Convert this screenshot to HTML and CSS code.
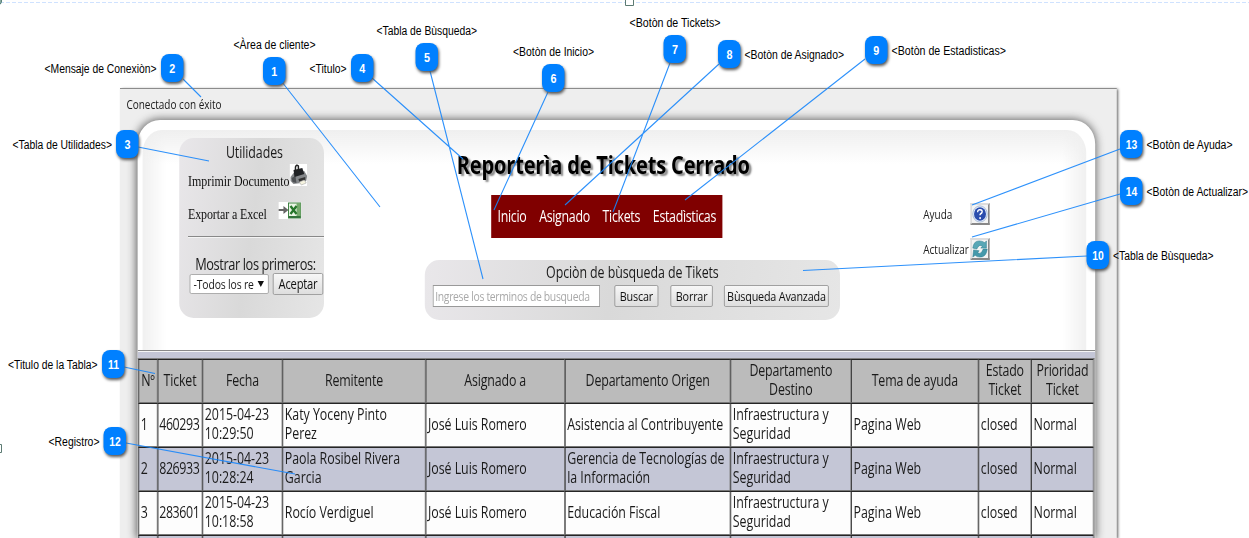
FILE: index.html
```html
<!DOCTYPE html>
<html lang="es">
<head>
<meta charset="utf-8">
<title>Reporterìa de Tickets Cerrado</title>
<link rel="stylesheet" href="styles.css">
</head>
<body>
<main class="window">
  <p class="status">Conectado con éxito</p>
  <section class="panel">
    <div class="panel-head">
      <aside class="utilities">
        <h2 class="box-title">Utilidades</h2>
        <div class="util-row print"><span class="util-link">Imprimir Documento</span>
          <svg class="icon-print" viewBox="0 0 18 22" preserveAspectRatio="none"><path fill="#fff" d="M0 0h18v22H0z"/><path d="M1 13l3-4 11-2 3 5-1 5-5 2-8 1-3-3z" fill="#85888b"/><path d="M2 14l4-2 1 7-4-1z" fill="#4d5053"/><path d="M4 6l9-2 2 6-10 3z" fill="#202225"/><path d="M6 7V3q1-3 3-1v5" fill="none" stroke="#222" stroke-width="1.5"/><path d="M9 15l7-2v3l-6 2z" fill="#333"/><path d="M10 18l5-2 2 3-5 2z" fill="#f5f3df" stroke="#aaa" stroke-width=".6"/></svg>
        </div>
        <div class="util-row excel"><span class="util-link">Exportar a Excel</span>
          <svg class="icon-excel" viewBox="0 0 23 17" preserveAspectRatio="none"><path fill="#fff" d="M0 0h23v17H0z"/><path d="M0 7h5V4l5 4-5 4V9H0z" fill="#666"/><path d="M10 1h12v15H10z" fill="#eaf5e5" stroke="#408344"/><path d="M18 1h4v15h-4z" fill="#76aa6d"/><path d="M12 4l6 8m0-8l-6 8" stroke="#26762b" stroke-width="2.3"/><path d="M10 15h12" stroke="#32733a" stroke-width="2"/></svg>
        </div>
        <hr class="rule">
        <p class="show-label">Mostrar los primeros:</p>
        <div class="show-row"><div class="select"><span class="select-text">-Todos los re</span><span class="arrow"></span></div><button class="btn accept">Aceptar</button></div>
      </aside>
      <div class="center">
        <h1 class="title">Reporterìa de Tickets Cerrado</h1>
        <nav class="nav"><a>Inicio</a><a>Asignado</a><a>Tickets</a><a>Estadìsticas</a></nav>
        <form class="search">
          <h2 class="box-title search-title">Opciòn de bùsqueda de Tikets</h2>
          <div class="search-row"><input class="query" placeholder="Ingrese los terminos de busqueda"><button type="button" class="btn find">Buscar</button><button type="button" class="btn clear">Borrar</button><button type="button" class="btn advanced">Bùsqueda Avanzada</button></div>
        </form>
      </div>
      <div class="tools">
        <div class="tool"><span>Ayuda</span><span class="tool-btn"><svg viewBox="0 0 20 20" preserveAspectRatio="none"><circle cx="10" cy="10" r="9" fill="#edf4ff" stroke="#9cb4d2"/><circle cx="10" cy="10" r="7.500" fill="#2b4dad"/><path d="M7 8q.2-3 3-2.700 3.500.3 2.500 2.700-.3 1-1.700 1.700-.8.5-.8 1.700" fill="none" stroke="#fff" stroke-width="1.8"/><circle cx="10.100" cy="14.500" r="1.200" fill="#fff"/></svg></span></div>
        <div class="tool"><span>Actualizar</span><span class="tool-btn"><svg viewBox="0 0 20 20" preserveAspectRatio="none"><path d="M1 9Q2 1 9 1q4 0 7 2l2-2v8h-7l2-2q-4-3-7 3z" fill="#58a7b6" stroke="#287b8d" stroke-width=".6"/><path d="M19 10q-1 9-9 9-4 0-6-2l-3 2 1-8 7 1-2 2q4 3 7-4z" fill="#4599ab" stroke="#287b8d" stroke-width=".6"/></svg></span></div>
      </div>
    </div>
    <div class="band"></div>
    <table class="tickets">
      <colgroup><col class="c-num"><col class="c-ticket"><col class="c-date"><col class="c-from"><col class="c-to"><col class="c-origin"><col class="c-dest"><col class="c-topic"><col class="c-state"><col class="c-prio"></colgroup>
      <tr><th>Nº</th><th>Ticket</th><th>Fecha</th><th>Remitente</th><th>Asignado a</th><th>Departamento Origen</th><th>Departamento<br>Destino</th><th>Tema de ayuda</th><th>Estado<br>Ticket</th><th>Prioridad<br>Ticket</th></tr>
      <tr><td>1</td><td class="id">460293</td><td>2015-04-23<br>10:29:50</td><td>Katy Yoceny Pinto<br>Perez</td><td>José Luis Romero</td><td>Asistencia al Contribuyente</td><td>Infraestructura y<br>Seguridad</td><td>Pagina Web</td><td>closed</td><td>Normal</td></tr>
      <tr class="alt"><td>2</td><td class="id">826933</td><td>2015-04-23<br>10:28:24</td><td>Paola Rosibel Rivera<br>Garcia</td><td>José Luis Romero</td><td>Gerencia de Tecnologías de<br>la Información</td><td>Infraestructura y<br>Seguridad</td><td>Pagina Web</td><td>closed</td><td>Normal</td></tr>
      <tr><td>3</td><td class="id">283601</td><td>2015-04-23<br>10:18:58</td><td>Rocío Verdiguel</td><td>José Luis Romero</td><td>Educación Fiscal</td><td>Infraestructura y<br>Seguridad</td><td>Pagina Web</td><td>closed</td><td>Normal</td></tr>
      <tr class="alt"><td></td><td></td><td></td><td></td><td></td><td></td><td></td><td></td><td></td><td></td></tr>
    </table>
  </section>
</main>

<svg class="callouts" width="1249" height="538" viewBox="0 0 1249 538">
  <path d="M0 2.500H1249" stroke="#cfe2ff" stroke-dasharray="4 2"/>
  <circle cx="-3" cy="1" r="4.500" fill="#8fb0a8" stroke="#4f7a70"/>
  <path d="M625.500-2h8v7.500h-8zM-6 444.500h7.500v8H-6z" fill="#fff" stroke="#5c7b73"/>
  <g class="leaders">
    <path d="M282 82L380 207M183 79l18 18M138 147l71 14M372 78l91 81M430 71l53 208M548 92l-54 118M670 63l-57 149M719 64L565 205M865 59L685 200M1087 256l-284 14.500M124 367l31 6.500M126 443l169 31M1120 149l-148 56M1120 194l-148 43"/>
  </g>
  <g class="badges">
    <rect x="263" y="57" width="22.500" height="28" rx="8"/><rect x="161" y="54" width="22.500" height="28" rx="8"/><rect x="116" y="130" width="22.500" height="28" rx="8"/><rect x="351" y="54" width="22.500" height="28" rx="8"/><rect x="415.500" y="43" width="22.500" height="28" rx="8"/><rect x="542" y="64" width="22.500" height="28" rx="8"/><rect x="663.500" y="35" width="22.500" height="28" rx="8"/><rect x="718" y="40" width="22.500" height="28" rx="8"/><rect x="865" y="36" width="22.500" height="28" rx="8"/><rect x="1086.500" y="241" width="22.500" height="28" rx="8"/><rect x="102" y="350" width="22.500" height="28" rx="8"/><rect x="103.500" y="427" width="22.500" height="28" rx="8"/><rect x="1120" y="130" width="22.500" height="28" rx="8"/><rect x="1120" y="177" width="22.500" height="28" rx="8"/>
  </g>
  <g class="numbers">
    <text x="274.300" y="76" textLength="6" lengthAdjust="spacingAndGlyphs">1</text><text x="172.300" y="73" textLength="6" lengthAdjust="spacingAndGlyphs">2</text><text x="127.500" y="149" textLength="6" lengthAdjust="spacingAndGlyphs">3</text><text x="362.300" y="73" textLength="6" lengthAdjust="spacingAndGlyphs">4</text><text x="427" y="62" textLength="6" lengthAdjust="spacingAndGlyphs">5</text><text x="553.500" y="83" textLength="6" lengthAdjust="spacingAndGlyphs">6</text><text x="675" y="54" textLength="6" lengthAdjust="spacingAndGlyphs">7</text><text x="729.500" y="59" textLength="6" lengthAdjust="spacingAndGlyphs">8</text><text x="876.300" y="55" textLength="6" lengthAdjust="spacingAndGlyphs">9</text>
    <text x="1098" y="260" textLength="11.500" lengthAdjust="spacingAndGlyphs">10</text><text x="113.500" y="369" textLength="11" lengthAdjust="spacingAndGlyphs">11</text><text x="115" y="446" textLength="11.500" lengthAdjust="spacingAndGlyphs">12</text><text x="1131.500" y="149" textLength="11.500" lengthAdjust="spacingAndGlyphs">13</text><text x="1131.500" y="196" textLength="11.500" lengthAdjust="spacingAndGlyphs">14</text>
  </g>
  <g class="labels">
    <text x="44.500" y="73" textLength="112" lengthAdjust="spacingAndGlyphs">&lt;Mensaje de Conexiòn&gt;</text>
    <text x="233.500" y="49" textLength="82" lengthAdjust="spacingAndGlyphs">&lt;Àrea de cliente&gt;</text>
    <text x="309.500" y="73" textLength="37" lengthAdjust="spacingAndGlyphs">&lt;Titulo&gt;</text>
    <text x="376.500" y="35" textLength="100.500" lengthAdjust="spacingAndGlyphs">&lt;Tabla de Bùsqueda&gt;</text>
    <text x="513" y="56" textLength="81" lengthAdjust="spacingAndGlyphs">&lt;Botòn de Inicio&gt;</text>
    <text x="629.500" y="27" textLength="91" lengthAdjust="spacingAndGlyphs">&lt;Botòn de Tickets&gt;</text>
    <text x="744.500" y="59" textLength="99.500" lengthAdjust="spacingAndGlyphs">&lt;Botòn de Asignado&gt;</text>
    <text x="891.500" y="55" textLength="114.500" lengthAdjust="spacingAndGlyphs">&lt;Botòn de Estadisticas&gt;</text>
    <text x="12.500" y="149" textLength="99.500" lengthAdjust="spacingAndGlyphs">&lt;Tabla de Utilidades&gt;</text>
    <text x="1146.500" y="149" textLength="86" lengthAdjust="spacingAndGlyphs">&lt;Botòn de Ayuda&gt;</text>
    <text x="1146.500" y="196" textLength="101.500" lengthAdjust="spacingAndGlyphs">&lt;Botòn de Actualizar&gt;</text>
    <text x="1113" y="260" textLength="100.500" lengthAdjust="spacingAndGlyphs">&lt;Tabla de Bùsqueda&gt;</text>
    <text x="8" y="369" textLength="89.500" lengthAdjust="spacingAndGlyphs">&lt;Titulo de la Tabla&gt;</text>
    <text x="48.500" y="446" textLength="51" lengthAdjust="spacingAndGlyphs">&lt;Registro&gt;</text>
  </g>
</svg>
</body>
</html>
```
FILE: styles.css
```css
* { box-sizing: border-box; }
html, body { height: 538px; overflow: hidden; }
body { margin: 0; padding: 88px 0 0 119.500px; background: #fff; font-family: "Open Sans", sans-serif; color: #1a1a1a; }
h1, h2, p { margin: 0; font-weight: 400; }

/* The captured window is condensed horizontally to 80%. */
.window { width: 1246px; height: 450px; transform: scaleX(.8); transform-origin: 0 0; background: #eee; border-top: 1px solid #8c8c8c; box-shadow: 3px 1px 3px #666; padding: 0 27px 0 22px; white-space: nowrap; }
.status { height: 31px; margin-left: -14px; font-size: 12.500px; line-height: 31px; }
.panel { width: 1197px; height: 418px; overflow: hidden; background: #fff; border-radius: 28px 28px 0 0 / 24px 24px 0 0; box-shadow: 0 0 10px 1px #666; }
.panel-head { height: 230px; display: flex; align-items: flex-start; padding-left: 52px; position: relative; }
.panel-head::before { content: ""; position: absolute; inset: 10px 11px 0 6px; border-radius: 24px 24px 0 0; background: linear-gradient(#efefef, #fff0 34px), linear-gradient(90deg, #f0f0f0, #fff0 30px), linear-gradient(270deg, #f0f0f0, #fff0 30px); }
.panel-head > * { position: relative; }

.utilities { width: 181px; height: 180px; margin-top: 18px; border-radius: 18px / 15px; background: linear-gradient(100deg, #e9e7ea, #d9d9d9 50%, #e6e6e6); }
.box-title { font-size: 15.500px; line-height: 20px; text-align: center; letter-spacing: -.1px; }
.utilities .box-title { padding: 4px 0 0 7px; height: 24px; }
.util-row { display: flex; padding-left: 11px; font-family: "Liberation Serif", serif; font-size: 15px; color: #111; }
.util-link { line-height: 20px; flex: none; }
.print { height: 38px; padding-top: 2px; }
.print .util-link { width: 127px; padding-top: 7px; letter-spacing: -.06px; }
.icon-print { width: 22px; height: 22px; }
.excel { height: 36px; padding-top: 2px; }
.excel .util-link { width: 113px; padding-top: 2px; letter-spacing: -.15px; }
.icon-excel { width: 29px; height: 17px; }
.rule { height: 2px; margin: 0 0 0 11px; border: 0; border-top: 1px solid #888; border-bottom: 1px solid #f4f4f4; }
.show-label { margin: 16px 0 0 20px; font-size: 16px; line-height: 20px; letter-spacing: -.5px; }
.show-row { display: flex; align-items: center; gap: 5px; padding-left: 13px; margin-top: -1px; }
.select { display: flex; align-items: center; justify-content: space-between; width: 99px; height: 20px; padding: 0 5px 0 4px; border: 1px solid #a5a5a5; border-radius: 2px; background: #fff; font-size: 13px; }
.select-text { width: 78px; flex: none; overflow: hidden; letter-spacing: -.2px; }
.arrow { border: 4px solid transparent; border-top: 6px solid #111; border-bottom: 0; }
.btn { height: 22px; padding: 0; border: 1px solid #999; border-radius: 2px; background: linear-gradient(#f7f7f7, #dedede); font: 13.500px/18px "Open Sans", sans-serif; color: #111; text-align: center; letter-spacing: -.25px; }
.accept { width: 63px; font-size: 14px; }

.center { width: 519px; margin-left: 126px; }
.title { margin: 27px 0 0 40px; height: 48px; font-size: 25px; line-height: 34px; font-weight: 700; letter-spacing: -.2px; color: #000; text-shadow: 3px 2px 2px #888; }
.nav { display: flex; justify-content: space-between; width: 289px; height: 43px; margin-left: 83px; padding: 0 8px; background: #800000; color: #fff; font-size: 15.500px; font-weight: 500; line-height: 43px; letter-spacing: -.4px; }
.search { width: 519px; height: 60px; margin-top: 22px; border-radius: 18px / 15px; background: linear-gradient(100deg, #e9e7ea, #d9d9d9 45%, #e6e6e6); }
.search-title { padding-top: 2px; height: 23px; }
.search-row { display: flex; padding: 2px 0 0 10px; }
.query { width: 209px; height: 22px; padding: 0 2px; border: 1px solid #999; background: #fff; font: 13px "Open Sans", sans-serif; letter-spacing: -.4px; }
.query::placeholder { color: #a9a9a9; opacity: 1; }
.find { width: 55px; margin-left: 18px; }
.clear { width: 53px; margin-left: 15px; }
.advanced { width: 131px; margin-left: 14px; }

.tools { margin: 83px 0 0 104px; font-size: 12.500px; }
.tool { display: flex; align-items: center; width: 83px; height: 22px; margin-bottom: 13px; justify-content: space-between; letter-spacing: 0; }
.tool-btn { width: 24px; height: 22px; flex: none; border: 2px solid; border-color: #ddd #888 #888 #ddd; background: #f4f4f4; }
.tool-btn svg { display: block; width: 20px; height: 18px; }

.band { height: 8px; background: #c4c6d6; border-top: 1px solid #888; box-shadow: inset 0 1px #f4f4f4; }
.tickets { width: 1196px; table-layout: fixed; border-collapse: separate; border-spacing: 0; border-top: 1px solid #808080; border-left: 1px solid #808080; border-right: 1px solid #222; font-size: 15.500px; line-height: 19px; letter-spacing: -.05px; }
.tickets tr { height: 44px; background: #fdfdfd; }
.tickets .alt { background: #c4c6d6; }
.tickets th, .tickets td { padding: 1px 2px 3px; border: 1px solid; border-color: #252525 #777 #777 #252525; }
.tickets th { background: #bbb; font-weight: 400; letter-spacing: -.2px; }
.tickets .id { padding-left: 1px; letter-spacing: -.5px; }
.c-num { width: 24px; } .c-ticket { width: 56px; } .c-date { width: 100px; } .c-from { width: 179px; } .c-to { width: 174px; }
.c-origin { width: 207px; } .c-dest { width: 151px; } .c-topic { width: 159px; } .c-state { width: 66px; } .c-prio { width: 78px; }

.callouts { position: absolute; left: 0; top: 0; }
.leaders path { stroke: #1685fb; stroke-width: 1.1; fill: none; opacity: .9; }
.badges rect { fill: #0080ff; filter: drop-shadow(1px 2px 1.500px #555); }
.numbers text { font: 700 13px "Liberation Sans", sans-serif; fill: #fff; text-anchor: middle; }
.labels text { font: 12px "Liberation Sans", sans-serif; fill: #000; }
```
